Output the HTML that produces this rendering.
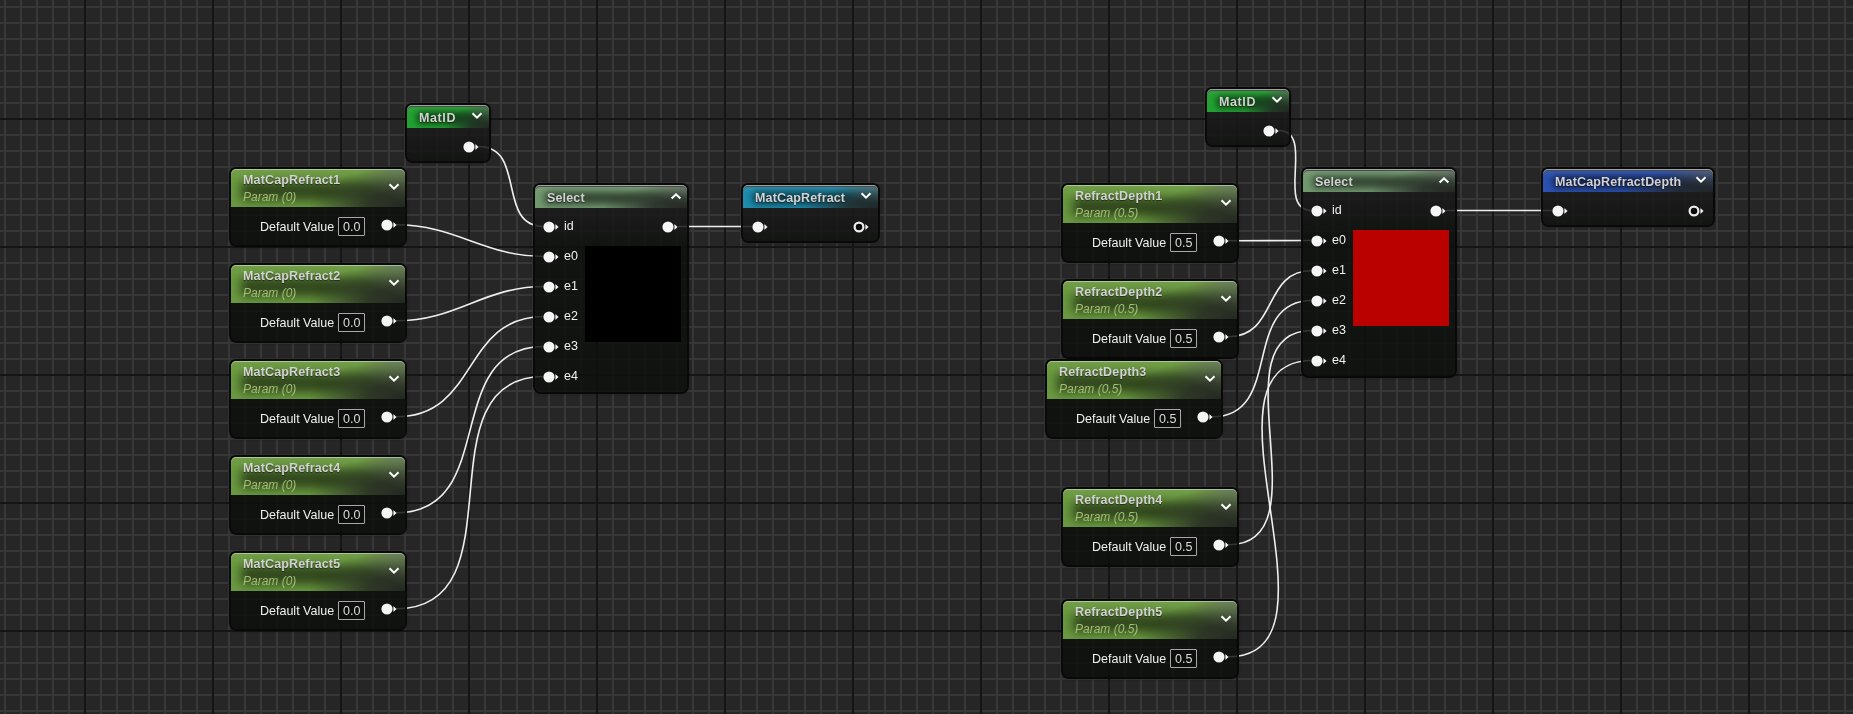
<!DOCTYPE html>
<html><head><meta charset="utf-8"><style>
*{margin:0;padding:0;box-sizing:border-box}
html,body{width:1853px;height:714px;overflow:hidden;background:#262626}
#g{position:absolute;left:0;top:0;width:1853px;height:714px;
background:
 linear-gradient(to right,#151515 0,#151515 2px,transparent 2px) 84px 0/128px 100% repeat-x,
 linear-gradient(to bottom,#151515 0,#151515 2px,transparent 2px) 0 118px/100% 128px repeat-y,
 linear-gradient(to right,#373737 0,#373737 2px,transparent 2px) 4px 0/16px 100% repeat-x,
 linear-gradient(to bottom,#373737 0,#373737 2px,transparent 2px) 0 6px/100% 16px repeat-y,
 #262626;}
.wires{position:absolute;left:0;top:0}
.wires path{fill:none;stroke:#efefef;stroke-width:1.6}
.node{position:absolute;border-radius:5px 5px 6px 6px;box-shadow:0 0 0 2px rgba(8,8,8,0.97),0 0 3px 2px rgba(0,0,0,0.22)}
.hdr{position:absolute;left:0;right:0;top:0;border-radius:5px 5px 0 0;overflow:hidden}
.shade{position:absolute;left:10px;right:0}
.spill,.gloss{position:absolute;left:0;right:0;top:0;bottom:0;border-radius:5px 5px 0 0}
.gloss{background:linear-gradient(to bottom,rgba(255,255,255,0.06),rgba(255,255,255,0) 40%)}
.body{position:absolute;left:0;right:0;bottom:0;border-radius:0 0 6px 6px;background:rgba(12,15,12,0.83)}
.bg2{background:linear-gradient(to bottom,rgba(26,27,26,0.88) 0px,rgba(22,23,22,0.86) 12px,rgba(12,15,12,0.83) 45px)}
.t,.sub,.lbl,.val{will-change:transform;position:absolute;white-space:nowrap;font-family:"Liberation Sans", sans-serif;line-height:0;height:0}
.t{letter-spacing:0.15px;font-weight:bold;font-size:12.5px;color:#d2d2d2;text-shadow:0 1px 1px rgba(0,0,0,0.5)}
.sub{font-style:italic;font-size:12px;color:#a4bc76}
.lbl{font-size:12.5px;color:#f0f0f0}
.val{font-size:12.5px;color:#dcdcdc}
.vbox{position:absolute;width:27px;height:19px;border:1px solid #a8a8a8;border-radius:1px;background:rgba(10,10,10,0.6)}
.ic{position:absolute;overflow:visible}
.prev{position:absolute;width:96px;height:96px}
</style></head>
<body><div id="g"></div><svg class="wires" width="1853" height="714" viewBox="0 0 1853 714"><path d="M478.5 146.5 C527.0 146.5 495.6 226.5 544.1 226.5"/><path d="M396.3 224.8 C456.1 224.8 484.3 256.5 544.1 256.5"/><path d="M396.3 320.8 C457.0 320.8 483.4 286.5 544.1 286.5"/><path d="M396.3 416.8 C479.0 416.8 461.4 316.5 544.1 316.5"/><path d="M396.3 512.8 C501.0 512.8 439.4 346.5 544.1 346.5"/><path d="M396.3 608.8 C523.0 608.8 417.4 376.5 544.1 376.5"/><path d="M678.0 226.5 C702.9 226.5 727.8 226.5 752.7 226.5"/><path d="M1278.5 130.5 C1316.4 130.5 1274.2 210.5 1312.1 210.5"/><path d="M1228.3 240.8 C1256.3 240.8 1284.1 240.5 1312.1 240.5"/><path d="M1228.3 336.8 C1278.3 336.8 1262.1 270.5 1312.1 270.5"/><path d="M1212.3 416.8 C1284.3 416.8 1240.1 300.5 1312.1 300.5"/><path d="M1228.3 544.8 C1327.7 544.8 1212.7 330.5 1312.1 330.5"/><path d="M1228.3 656.8 C1355.0 656.8 1185.4 360.5 1312.1 360.5"/><path d="M1446.0 210.5 C1481.6 210.5 1517.1 210.5 1552.7 210.5"/></svg><div class="node" style="left:407px;top:105px;width:81.5px;height:56.3px"><div class="hdr" style="height:23px;background:#22a232"><div class="shade" style="top:7px;height:12px;background:linear-gradient(to right,rgba(0,0,0,0.58) 0%,rgba(0,0,0,0.58) 50%,rgba(0,0,0,0.2) 100%);filter:blur(3.5px)"></div><div class="spill" style="background:radial-gradient(ellipse 28% 80% at 100% 0%, rgba(96,100,94,0.6) 0%, rgba(96,100,94,0) 100%),radial-gradient(ellipse 55% 105% at 100% 100%, rgba(34,36,34,0.97) 0%, rgba(34,36,34,0.8) 40%, rgba(34,36,34,0) 100%)"></div><div class="gloss" style="box-shadow: inset 0 1px 0 #a2a2a2, inset 0 2px 0 #4a4a4a"></div></div><div class="body bg2" style="top:23px"></div></div><div class="t" style="left:419.4px;top:118.2px;letter-spacing:0.6px">MatID</div><svg class="ic" style="left:470.1px;top:110px" width="14" height="11" viewBox="0 0 14 11"><path d="M2.5 3.2 L7 7.7 L11.5 3.2" fill="none" stroke="#fff" stroke-width="2"/></svg><svg class="ic" style="left:461.75px;top:139.5px" width="20" height="14" viewBox="0 0 20 14"><circle cx="7" cy="7" r="6.2" fill="rgba(0,0,0,0.55)"/><circle cx="7" cy="7" r="5.6" fill="#f6f6f6"/><path d="M12.9 3.4 L16.9 7 L12.9 10.6 Z" fill="rgba(0,0,0,0.5)"/><path d="M13.4 3.9 L16.6 7 L13.4 10.1 Z" fill="#f4f4f4"/></svg><div class="node" style="left:231px;top:169px;width:174px;height:75.5px"><div class="hdr" style="height:38px;background:#6a9a3e"><div class="shade" style="top:13px;height:18px;background:linear-gradient(to right,rgba(0,0,0,0.56) 0%,rgba(0,0,0,0.56) 50%,rgba(0,0,0,0.2) 100%);filter:blur(5.5px)"></div><div class="spill" style="background:radial-gradient(ellipse 28% 80% at 100% 0%, rgba(96,100,94,0.6) 0%, rgba(96,100,94,0) 100%),radial-gradient(ellipse 55% 105% at 100% 100%, rgba(34,36,34,0.97) 0%, rgba(34,36,34,0.8) 40%, rgba(34,36,34,0) 100%)"></div><div class="gloss" style="box-shadow: inset 0 1px 0 rgba(255,255,255,0.42)"></div></div><div class="body" style="top:38px"></div></div><div class="t" style="left:242.8px;top:180px;">MatCapRefract1</div><div class="sub" style="left:243.4px;top:196.8px;">Param (0)</div><svg class="ic" style="left:387px;top:181px" width="14" height="11" viewBox="0 0 14 11"><path d="M2.5 3.2 L7 7.7 L11.5 3.2" fill="none" stroke="#fff" stroke-width="2"/></svg><div class="lbl" style="left:260.2px;top:226.8px;">Default Value</div><div class="vbox" style="left:338px;top:217px"></div><div class="val" style="left:343px;top:227px;">0.0</div><svg class="ic" style="left:379.55px;top:217.8px" width="20" height="14" viewBox="0 0 20 14"><circle cx="7" cy="7" r="6.2" fill="rgba(0,0,0,0.55)"/><circle cx="7" cy="7" r="5.6" fill="#f6f6f6"/><path d="M12.9 3.4 L16.9 7 L12.9 10.6 Z" fill="rgba(0,0,0,0.5)"/><path d="M13.4 3.9 L16.6 7 L13.4 10.1 Z" fill="#f4f4f4"/></svg><div class="node" style="left:231px;top:265px;width:174px;height:75.5px"><div class="hdr" style="height:38px;background:#6a9a3e"><div class="shade" style="top:13px;height:18px;background:linear-gradient(to right,rgba(0,0,0,0.56) 0%,rgba(0,0,0,0.56) 50%,rgba(0,0,0,0.2) 100%);filter:blur(5.5px)"></div><div class="spill" style="background:radial-gradient(ellipse 28% 80% at 100% 0%, rgba(96,100,94,0.6) 0%, rgba(96,100,94,0) 100%),radial-gradient(ellipse 55% 105% at 100% 100%, rgba(34,36,34,0.97) 0%, rgba(34,36,34,0.8) 40%, rgba(34,36,34,0) 100%)"></div><div class="gloss" style="box-shadow: inset 0 1px 0 rgba(255,255,255,0.42)"></div></div><div class="body" style="top:38px"></div></div><div class="t" style="left:242.8px;top:276px;">MatCapRefract2</div><div class="sub" style="left:243.4px;top:292.8px;">Param (0)</div><svg class="ic" style="left:387px;top:277px" width="14" height="11" viewBox="0 0 14 11"><path d="M2.5 3.2 L7 7.7 L11.5 3.2" fill="none" stroke="#fff" stroke-width="2"/></svg><div class="lbl" style="left:260.2px;top:322.8px;">Default Value</div><div class="vbox" style="left:338px;top:313px"></div><div class="val" style="left:343px;top:323px;">0.0</div><svg class="ic" style="left:379.55px;top:313.8px" width="20" height="14" viewBox="0 0 20 14"><circle cx="7" cy="7" r="6.2" fill="rgba(0,0,0,0.55)"/><circle cx="7" cy="7" r="5.6" fill="#f6f6f6"/><path d="M12.9 3.4 L16.9 7 L12.9 10.6 Z" fill="rgba(0,0,0,0.5)"/><path d="M13.4 3.9 L16.6 7 L13.4 10.1 Z" fill="#f4f4f4"/></svg><div class="node" style="left:231px;top:361px;width:174px;height:75.5px"><div class="hdr" style="height:38px;background:#6a9a3e"><div class="shade" style="top:13px;height:18px;background:linear-gradient(to right,rgba(0,0,0,0.56) 0%,rgba(0,0,0,0.56) 50%,rgba(0,0,0,0.2) 100%);filter:blur(5.5px)"></div><div class="spill" style="background:radial-gradient(ellipse 28% 80% at 100% 0%, rgba(96,100,94,0.6) 0%, rgba(96,100,94,0) 100%),radial-gradient(ellipse 55% 105% at 100% 100%, rgba(34,36,34,0.97) 0%, rgba(34,36,34,0.8) 40%, rgba(34,36,34,0) 100%)"></div><div class="gloss" style="box-shadow: inset 0 1px 0 rgba(255,255,255,0.42)"></div></div><div class="body" style="top:38px"></div></div><div class="t" style="left:242.8px;top:372px;">MatCapRefract3</div><div class="sub" style="left:243.4px;top:388.8px;">Param (0)</div><svg class="ic" style="left:387px;top:373px" width="14" height="11" viewBox="0 0 14 11"><path d="M2.5 3.2 L7 7.7 L11.5 3.2" fill="none" stroke="#fff" stroke-width="2"/></svg><div class="lbl" style="left:260.2px;top:418.8px;">Default Value</div><div class="vbox" style="left:338px;top:409px"></div><div class="val" style="left:343px;top:419px;">0.0</div><svg class="ic" style="left:379.55px;top:409.8px" width="20" height="14" viewBox="0 0 20 14"><circle cx="7" cy="7" r="6.2" fill="rgba(0,0,0,0.55)"/><circle cx="7" cy="7" r="5.6" fill="#f6f6f6"/><path d="M12.9 3.4 L16.9 7 L12.9 10.6 Z" fill="rgba(0,0,0,0.5)"/><path d="M13.4 3.9 L16.6 7 L13.4 10.1 Z" fill="#f4f4f4"/></svg><div class="node" style="left:231px;top:457px;width:174px;height:75.5px"><div class="hdr" style="height:38px;background:#6a9a3e"><div class="shade" style="top:13px;height:18px;background:linear-gradient(to right,rgba(0,0,0,0.56) 0%,rgba(0,0,0,0.56) 50%,rgba(0,0,0,0.2) 100%);filter:blur(5.5px)"></div><div class="spill" style="background:radial-gradient(ellipse 28% 80% at 100% 0%, rgba(96,100,94,0.6) 0%, rgba(96,100,94,0) 100%),radial-gradient(ellipse 55% 105% at 100% 100%, rgba(34,36,34,0.97) 0%, rgba(34,36,34,0.8) 40%, rgba(34,36,34,0) 100%)"></div><div class="gloss" style="box-shadow: inset 0 1px 0 rgba(255,255,255,0.42)"></div></div><div class="body" style="top:38px"></div></div><div class="t" style="left:242.8px;top:468px;">MatCapRefract4</div><div class="sub" style="left:243.4px;top:484.8px;">Param (0)</div><svg class="ic" style="left:387px;top:469px" width="14" height="11" viewBox="0 0 14 11"><path d="M2.5 3.2 L7 7.7 L11.5 3.2" fill="none" stroke="#fff" stroke-width="2"/></svg><div class="lbl" style="left:260.2px;top:514.8px;">Default Value</div><div class="vbox" style="left:338px;top:505px"></div><div class="val" style="left:343px;top:515px;">0.0</div><svg class="ic" style="left:379.55px;top:505.79999999999995px" width="20" height="14" viewBox="0 0 20 14"><circle cx="7" cy="7" r="6.2" fill="rgba(0,0,0,0.55)"/><circle cx="7" cy="7" r="5.6" fill="#f6f6f6"/><path d="M12.9 3.4 L16.9 7 L12.9 10.6 Z" fill="rgba(0,0,0,0.5)"/><path d="M13.4 3.9 L16.6 7 L13.4 10.1 Z" fill="#f4f4f4"/></svg><div class="node" style="left:231px;top:553px;width:174px;height:75.5px"><div class="hdr" style="height:38px;background:#6a9a3e"><div class="shade" style="top:13px;height:18px;background:linear-gradient(to right,rgba(0,0,0,0.56) 0%,rgba(0,0,0,0.56) 50%,rgba(0,0,0,0.2) 100%);filter:blur(5.5px)"></div><div class="spill" style="background:radial-gradient(ellipse 28% 80% at 100% 0%, rgba(96,100,94,0.6) 0%, rgba(96,100,94,0) 100%),radial-gradient(ellipse 55% 105% at 100% 100%, rgba(34,36,34,0.97) 0%, rgba(34,36,34,0.8) 40%, rgba(34,36,34,0) 100%)"></div><div class="gloss" style="box-shadow: inset 0 1px 0 rgba(255,255,255,0.42)"></div></div><div class="body" style="top:38px"></div></div><div class="t" style="left:242.8px;top:564px;">MatCapRefract5</div><div class="sub" style="left:243.4px;top:580.8px;">Param (0)</div><svg class="ic" style="left:387px;top:565px" width="14" height="11" viewBox="0 0 14 11"><path d="M2.5 3.2 L7 7.7 L11.5 3.2" fill="none" stroke="#fff" stroke-width="2"/></svg><div class="lbl" style="left:260.2px;top:610.8px;">Default Value</div><div class="vbox" style="left:338px;top:601px"></div><div class="val" style="left:343px;top:611px;">0.0</div><svg class="ic" style="left:379.55px;top:601.8px" width="20" height="14" viewBox="0 0 20 14"><circle cx="7" cy="7" r="6.2" fill="rgba(0,0,0,0.55)"/><circle cx="7" cy="7" r="5.6" fill="#f6f6f6"/><path d="M12.9 3.4 L16.9 7 L12.9 10.6 Z" fill="rgba(0,0,0,0.5)"/><path d="M13.4 3.9 L16.6 7 L13.4 10.1 Z" fill="#f4f4f4"/></svg><div class="node" style="left:535px;top:185px;width:152.3px;height:207px"><div class="hdr" style="height:23px;background:#71996f"><div class="shade" style="top:7px;height:12px;background:linear-gradient(to right,rgba(0,0,0,0.55) 0%,rgba(0,0,0,0.55) 50%,rgba(0,0,0,0.2) 100%);filter:blur(3.5px)"></div><div class="spill" style="background:radial-gradient(ellipse 28% 80% at 100% 0%, rgba(96,100,94,0.6) 0%, rgba(96,100,94,0) 100%),radial-gradient(ellipse 55% 105% at 100% 100%, rgba(34,36,34,0.97) 0%, rgba(34,36,34,0.8) 40%, rgba(34,36,34,0) 100%)"></div><div class="gloss" style="box-shadow: inset 0 1px 0 #a2a2a2, inset 0 2px 0 #4a4a4a"></div></div><div class="body bg2" style="top:23px"></div></div><div class="t" style="left:547.4px;top:198px;">Select</div><svg class="ic" style="left:669px;top:190.5px" width="14" height="11" viewBox="0 0 14 11"><path d="M2.6 7.5 L7 3.3 L11.4 7.5" fill="none" stroke="#fff" stroke-width="2"/></svg><svg class="ic" style="left:542.35px;top:219.5px" width="20" height="14" viewBox="0 0 20 14"><circle cx="7" cy="7" r="6.2" fill="rgba(0,0,0,0.55)"/><circle cx="7" cy="7" r="5.6" fill="#f6f6f6"/><path d="M12.9 3.4 L16.9 7 L12.9 10.6 Z" fill="rgba(0,0,0,0.5)"/><path d="M13.4 3.9 L16.6 7 L13.4 10.1 Z" fill="#f4f4f4"/></svg><div class="lbl" style="left:564.3px;top:225.7px;">id</div><svg class="ic" style="left:542.35px;top:249.5px" width="20" height="14" viewBox="0 0 20 14"><circle cx="7" cy="7" r="6.2" fill="rgba(0,0,0,0.55)"/><circle cx="7" cy="7" r="5.6" fill="#f6f6f6"/><path d="M12.9 3.4 L16.9 7 L12.9 10.6 Z" fill="rgba(0,0,0,0.5)"/><path d="M13.4 3.9 L16.6 7 L13.4 10.1 Z" fill="#f4f4f4"/></svg><div class="lbl" style="left:564.3px;top:255.7px;">e0</div><svg class="ic" style="left:542.35px;top:279.5px" width="20" height="14" viewBox="0 0 20 14"><circle cx="7" cy="7" r="6.2" fill="rgba(0,0,0,0.55)"/><circle cx="7" cy="7" r="5.6" fill="#f6f6f6"/><path d="M12.9 3.4 L16.9 7 L12.9 10.6 Z" fill="rgba(0,0,0,0.5)"/><path d="M13.4 3.9 L16.6 7 L13.4 10.1 Z" fill="#f4f4f4"/></svg><div class="lbl" style="left:564.3px;top:285.7px;">e1</div><svg class="ic" style="left:542.35px;top:309.5px" width="20" height="14" viewBox="0 0 20 14"><circle cx="7" cy="7" r="6.2" fill="rgba(0,0,0,0.55)"/><circle cx="7" cy="7" r="5.6" fill="#f6f6f6"/><path d="M12.9 3.4 L16.9 7 L12.9 10.6 Z" fill="rgba(0,0,0,0.5)"/><path d="M13.4 3.9 L16.6 7 L13.4 10.1 Z" fill="#f4f4f4"/></svg><div class="lbl" style="left:564.3px;top:315.7px;">e2</div><svg class="ic" style="left:542.35px;top:339.5px" width="20" height="14" viewBox="0 0 20 14"><circle cx="7" cy="7" r="6.2" fill="rgba(0,0,0,0.55)"/><circle cx="7" cy="7" r="5.6" fill="#f6f6f6"/><path d="M12.9 3.4 L16.9 7 L12.9 10.6 Z" fill="rgba(0,0,0,0.5)"/><path d="M13.4 3.9 L16.6 7 L13.4 10.1 Z" fill="#f4f4f4"/></svg><div class="lbl" style="left:564.3px;top:345.7px;">e3</div><svg class="ic" style="left:542.35px;top:369.5px" width="20" height="14" viewBox="0 0 20 14"><circle cx="7" cy="7" r="6.2" fill="rgba(0,0,0,0.55)"/><circle cx="7" cy="7" r="5.6" fill="#f6f6f6"/><path d="M12.9 3.4 L16.9 7 L12.9 10.6 Z" fill="rgba(0,0,0,0.5)"/><path d="M13.4 3.9 L16.6 7 L13.4 10.1 Z" fill="#f4f4f4"/></svg><div class="lbl" style="left:564.3px;top:375.7px;">e4</div><svg class="ic" style="left:661.25px;top:219.5px" width="20" height="14" viewBox="0 0 20 14"><circle cx="7" cy="7" r="6.2" fill="rgba(0,0,0,0.55)"/><circle cx="7" cy="7" r="5.6" fill="#f6f6f6"/><path d="M12.9 3.4 L16.9 7 L12.9 10.6 Z" fill="rgba(0,0,0,0.5)"/><path d="M13.4 3.9 L16.6 7 L13.4 10.1 Z" fill="#f4f4f4"/></svg><div class="prev" style="left:585px;top:246px;background:#000"></div><div class="node" style="left:743px;top:185px;width:134.5px;height:56.3px"><div class="hdr" style="height:23px;background:#1d8cad"><div class="shade" style="top:7px;height:12px;background:linear-gradient(to right,rgba(0,0,0,0.58) 0%,rgba(0,0,0,0.58) 50%,rgba(0,0,0,0.2) 100%);filter:blur(3.5px)"></div><div class="spill" style="background:radial-gradient(ellipse 28% 80% at 100% 0%, rgba(96,100,94,0.6) 0%, rgba(96,100,94,0) 100%),radial-gradient(ellipse 55% 105% at 100% 100%, rgba(34,36,34,0.97) 0%, rgba(34,36,34,0.8) 40%, rgba(34,36,34,0) 100%)"></div><div class="gloss" style="box-shadow: inset 0 1px 0 #a2a2a2, inset 0 2px 0 #4a4a4a"></div></div><div class="body bg2" style="top:23px"></div></div><div class="t" style="left:755.4px;top:198.2px;">MatCapRefract</div><svg class="ic" style="left:859.1px;top:190px" width="14" height="11" viewBox="0 0 14 11"><path d="M2.5 3.2 L7 7.7 L11.5 3.2" fill="none" stroke="#fff" stroke-width="2"/></svg><svg class="ic" style="left:750.95px;top:219.5px" width="20" height="14" viewBox="0 0 20 14"><circle cx="7" cy="7" r="6.2" fill="rgba(0,0,0,0.55)"/><circle cx="7" cy="7" r="5.6" fill="#f6f6f6"/><path d="M12.9 3.4 L16.9 7 L12.9 10.6 Z" fill="rgba(0,0,0,0.5)"/><path d="M13.4 3.9 L16.6 7 L13.4 10.1 Z" fill="#f4f4f4"/></svg><svg class="ic" style="left:851.6px;top:219.5px" width="20" height="14" viewBox="0 0 20 14"><circle cx="7" cy="7" r="6.1" fill="rgba(0,0,0,0.55)"/><circle cx="7" cy="7" r="4.4" fill="#0a0a0a" stroke="#ececec" stroke-width="2.3"/><path d="M12.9 3.4 L16.9 7 L12.9 10.6 Z" fill="rgba(0,0,0,0.5)"/><path d="M13.4 3.9 L16.6 7 L13.4 10.1 Z" fill="#f4f4f4"/></svg><div class="node" style="left:1207px;top:89px;width:81.5px;height:56.3px"><div class="hdr" style="height:23px;background:#22a232"><div class="shade" style="top:7px;height:12px;background:linear-gradient(to right,rgba(0,0,0,0.58) 0%,rgba(0,0,0,0.58) 50%,rgba(0,0,0,0.2) 100%);filter:blur(3.5px)"></div><div class="spill" style="background:radial-gradient(ellipse 28% 80% at 100% 0%, rgba(96,100,94,0.6) 0%, rgba(96,100,94,0) 100%),radial-gradient(ellipse 55% 105% at 100% 100%, rgba(34,36,34,0.97) 0%, rgba(34,36,34,0.8) 40%, rgba(34,36,34,0) 100%)"></div><div class="gloss" style="box-shadow: inset 0 1px 0 #a2a2a2, inset 0 2px 0 #4a4a4a"></div></div><div class="body bg2" style="top:23px"></div></div><div class="t" style="left:1219.4px;top:102.2px;letter-spacing:0.6px">MatID</div><svg class="ic" style="left:1270.1px;top:94px" width="14" height="11" viewBox="0 0 14 11"><path d="M2.5 3.2 L7 7.7 L11.5 3.2" fill="none" stroke="#fff" stroke-width="2"/></svg><svg class="ic" style="left:1261.75px;top:123.5px" width="20" height="14" viewBox="0 0 20 14"><circle cx="7" cy="7" r="6.2" fill="rgba(0,0,0,0.55)"/><circle cx="7" cy="7" r="5.6" fill="#f6f6f6"/><path d="M12.9 3.4 L16.9 7 L12.9 10.6 Z" fill="rgba(0,0,0,0.5)"/><path d="M13.4 3.9 L16.6 7 L13.4 10.1 Z" fill="#f4f4f4"/></svg><div class="node" style="left:1063px;top:185px;width:174px;height:75.5px"><div class="hdr" style="height:38px;background:#6a9a3e"><div class="shade" style="top:13px;height:18px;background:linear-gradient(to right,rgba(0,0,0,0.56) 0%,rgba(0,0,0,0.56) 50%,rgba(0,0,0,0.2) 100%);filter:blur(5.5px)"></div><div class="spill" style="background:radial-gradient(ellipse 28% 80% at 100% 0%, rgba(96,100,94,0.6) 0%, rgba(96,100,94,0) 100%),radial-gradient(ellipse 55% 105% at 100% 100%, rgba(34,36,34,0.97) 0%, rgba(34,36,34,0.8) 40%, rgba(34,36,34,0) 100%)"></div><div class="gloss" style="box-shadow: inset 0 1px 0 rgba(255,255,255,0.42)"></div></div><div class="body" style="top:38px"></div></div><div class="t" style="left:1074.8px;top:196px;">RefractDepth1</div><div class="sub" style="left:1075.4px;top:212.8px;">Param (0.5)</div><svg class="ic" style="left:1219px;top:197px" width="14" height="11" viewBox="0 0 14 11"><path d="M2.5 3.2 L7 7.7 L11.5 3.2" fill="none" stroke="#fff" stroke-width="2"/></svg><div class="lbl" style="left:1092.2px;top:242.8px;">Default Value</div><div class="vbox" style="left:1170px;top:233px"></div><div class="val" style="left:1175px;top:243px;">0.5</div><svg class="ic" style="left:1211.55px;top:233.8px" width="20" height="14" viewBox="0 0 20 14"><circle cx="7" cy="7" r="6.2" fill="rgba(0,0,0,0.55)"/><circle cx="7" cy="7" r="5.6" fill="#f6f6f6"/><path d="M12.9 3.4 L16.9 7 L12.9 10.6 Z" fill="rgba(0,0,0,0.5)"/><path d="M13.4 3.9 L16.6 7 L13.4 10.1 Z" fill="#f4f4f4"/></svg><div class="node" style="left:1063px;top:281px;width:174px;height:75.5px"><div class="hdr" style="height:38px;background:#6a9a3e"><div class="shade" style="top:13px;height:18px;background:linear-gradient(to right,rgba(0,0,0,0.56) 0%,rgba(0,0,0,0.56) 50%,rgba(0,0,0,0.2) 100%);filter:blur(5.5px)"></div><div class="spill" style="background:radial-gradient(ellipse 28% 80% at 100% 0%, rgba(96,100,94,0.6) 0%, rgba(96,100,94,0) 100%),radial-gradient(ellipse 55% 105% at 100% 100%, rgba(34,36,34,0.97) 0%, rgba(34,36,34,0.8) 40%, rgba(34,36,34,0) 100%)"></div><div class="gloss" style="box-shadow: inset 0 1px 0 rgba(255,255,255,0.42)"></div></div><div class="body" style="top:38px"></div></div><div class="t" style="left:1074.8px;top:292px;">RefractDepth2</div><div class="sub" style="left:1075.4px;top:308.8px;">Param (0.5)</div><svg class="ic" style="left:1219px;top:293px" width="14" height="11" viewBox="0 0 14 11"><path d="M2.5 3.2 L7 7.7 L11.5 3.2" fill="none" stroke="#fff" stroke-width="2"/></svg><div class="lbl" style="left:1092.2px;top:338.8px;">Default Value</div><div class="vbox" style="left:1170px;top:329px"></div><div class="val" style="left:1175px;top:339px;">0.5</div><svg class="ic" style="left:1211.55px;top:329.8px" width="20" height="14" viewBox="0 0 20 14"><circle cx="7" cy="7" r="6.2" fill="rgba(0,0,0,0.55)"/><circle cx="7" cy="7" r="5.6" fill="#f6f6f6"/><path d="M12.9 3.4 L16.9 7 L12.9 10.6 Z" fill="rgba(0,0,0,0.5)"/><path d="M13.4 3.9 L16.6 7 L13.4 10.1 Z" fill="#f4f4f4"/></svg><div class="node" style="left:1047px;top:361px;width:174px;height:75.5px"><div class="hdr" style="height:38px;background:#6a9a3e"><div class="shade" style="top:13px;height:18px;background:linear-gradient(to right,rgba(0,0,0,0.56) 0%,rgba(0,0,0,0.56) 50%,rgba(0,0,0,0.2) 100%);filter:blur(5.5px)"></div><div class="spill" style="background:radial-gradient(ellipse 28% 80% at 100% 0%, rgba(96,100,94,0.6) 0%, rgba(96,100,94,0) 100%),radial-gradient(ellipse 55% 105% at 100% 100%, rgba(34,36,34,0.97) 0%, rgba(34,36,34,0.8) 40%, rgba(34,36,34,0) 100%)"></div><div class="gloss" style="box-shadow: inset 0 1px 0 rgba(255,255,255,0.42)"></div></div><div class="body" style="top:38px"></div></div><div class="t" style="left:1058.8px;top:372px;">RefractDepth3</div><div class="sub" style="left:1059.4px;top:388.8px;">Param (0.5)</div><svg class="ic" style="left:1203px;top:373px" width="14" height="11" viewBox="0 0 14 11"><path d="M2.5 3.2 L7 7.7 L11.5 3.2" fill="none" stroke="#fff" stroke-width="2"/></svg><div class="lbl" style="left:1076.2px;top:418.8px;">Default Value</div><div class="vbox" style="left:1154px;top:409px"></div><div class="val" style="left:1159px;top:419px;">0.5</div><svg class="ic" style="left:1195.55px;top:409.8px" width="20" height="14" viewBox="0 0 20 14"><circle cx="7" cy="7" r="6.2" fill="rgba(0,0,0,0.55)"/><circle cx="7" cy="7" r="5.6" fill="#f6f6f6"/><path d="M12.9 3.4 L16.9 7 L12.9 10.6 Z" fill="rgba(0,0,0,0.5)"/><path d="M13.4 3.9 L16.6 7 L13.4 10.1 Z" fill="#f4f4f4"/></svg><div class="node" style="left:1063px;top:489px;width:174px;height:75.5px"><div class="hdr" style="height:38px;background:#6a9a3e"><div class="shade" style="top:13px;height:18px;background:linear-gradient(to right,rgba(0,0,0,0.56) 0%,rgba(0,0,0,0.56) 50%,rgba(0,0,0,0.2) 100%);filter:blur(5.5px)"></div><div class="spill" style="background:radial-gradient(ellipse 28% 80% at 100% 0%, rgba(96,100,94,0.6) 0%, rgba(96,100,94,0) 100%),radial-gradient(ellipse 55% 105% at 100% 100%, rgba(34,36,34,0.97) 0%, rgba(34,36,34,0.8) 40%, rgba(34,36,34,0) 100%)"></div><div class="gloss" style="box-shadow: inset 0 1px 0 rgba(255,255,255,0.42)"></div></div><div class="body" style="top:38px"></div></div><div class="t" style="left:1074.8px;top:500px;">RefractDepth4</div><div class="sub" style="left:1075.4px;top:516.8px;">Param (0.5)</div><svg class="ic" style="left:1219px;top:501px" width="14" height="11" viewBox="0 0 14 11"><path d="M2.5 3.2 L7 7.7 L11.5 3.2" fill="none" stroke="#fff" stroke-width="2"/></svg><div class="lbl" style="left:1092.2px;top:546.8px;">Default Value</div><div class="vbox" style="left:1170px;top:537px"></div><div class="val" style="left:1175px;top:547px;">0.5</div><svg class="ic" style="left:1211.55px;top:537.8px" width="20" height="14" viewBox="0 0 20 14"><circle cx="7" cy="7" r="6.2" fill="rgba(0,0,0,0.55)"/><circle cx="7" cy="7" r="5.6" fill="#f6f6f6"/><path d="M12.9 3.4 L16.9 7 L12.9 10.6 Z" fill="rgba(0,0,0,0.5)"/><path d="M13.4 3.9 L16.6 7 L13.4 10.1 Z" fill="#f4f4f4"/></svg><div class="node" style="left:1063px;top:601px;width:174px;height:75.5px"><div class="hdr" style="height:38px;background:#6a9a3e"><div class="shade" style="top:13px;height:18px;background:linear-gradient(to right,rgba(0,0,0,0.56) 0%,rgba(0,0,0,0.56) 50%,rgba(0,0,0,0.2) 100%);filter:blur(5.5px)"></div><div class="spill" style="background:radial-gradient(ellipse 28% 80% at 100% 0%, rgba(96,100,94,0.6) 0%, rgba(96,100,94,0) 100%),radial-gradient(ellipse 55% 105% at 100% 100%, rgba(34,36,34,0.97) 0%, rgba(34,36,34,0.8) 40%, rgba(34,36,34,0) 100%)"></div><div class="gloss" style="box-shadow: inset 0 1px 0 rgba(255,255,255,0.42)"></div></div><div class="body" style="top:38px"></div></div><div class="t" style="left:1074.8px;top:612px;">RefractDepth5</div><div class="sub" style="left:1075.4px;top:628.8px;">Param (0.5)</div><svg class="ic" style="left:1219px;top:613px" width="14" height="11" viewBox="0 0 14 11"><path d="M2.5 3.2 L7 7.7 L11.5 3.2" fill="none" stroke="#fff" stroke-width="2"/></svg><div class="lbl" style="left:1092.2px;top:658.8px;">Default Value</div><div class="vbox" style="left:1170px;top:649px"></div><div class="val" style="left:1175px;top:659px;">0.5</div><svg class="ic" style="left:1211.55px;top:649.8px" width="20" height="14" viewBox="0 0 20 14"><circle cx="7" cy="7" r="6.2" fill="rgba(0,0,0,0.55)"/><circle cx="7" cy="7" r="5.6" fill="#f6f6f6"/><path d="M12.9 3.4 L16.9 7 L12.9 10.6 Z" fill="rgba(0,0,0,0.5)"/><path d="M13.4 3.9 L16.6 7 L13.4 10.1 Z" fill="#f4f4f4"/></svg><div class="node" style="left:1303px;top:169px;width:152.3px;height:207px"><div class="hdr" style="height:23px;background:#71996f"><div class="shade" style="top:7px;height:12px;background:linear-gradient(to right,rgba(0,0,0,0.55) 0%,rgba(0,0,0,0.55) 50%,rgba(0,0,0,0.2) 100%);filter:blur(3.5px)"></div><div class="spill" style="background:radial-gradient(ellipse 28% 80% at 100% 0%, rgba(96,100,94,0.6) 0%, rgba(96,100,94,0) 100%),radial-gradient(ellipse 55% 105% at 100% 100%, rgba(34,36,34,0.97) 0%, rgba(34,36,34,0.8) 40%, rgba(34,36,34,0) 100%)"></div><div class="gloss" style="box-shadow: inset 0 1px 0 #a2a2a2, inset 0 2px 0 #4a4a4a"></div></div><div class="body bg2" style="top:23px"></div></div><div class="t" style="left:1315.4px;top:182px;">Select</div><svg class="ic" style="left:1437px;top:174.5px" width="14" height="11" viewBox="0 0 14 11"><path d="M2.6 7.5 L7 3.3 L11.4 7.5" fill="none" stroke="#fff" stroke-width="2"/></svg><svg class="ic" style="left:1310.35px;top:203.5px" width="20" height="14" viewBox="0 0 20 14"><circle cx="7" cy="7" r="6.2" fill="rgba(0,0,0,0.55)"/><circle cx="7" cy="7" r="5.6" fill="#f6f6f6"/><path d="M12.9 3.4 L16.9 7 L12.9 10.6 Z" fill="rgba(0,0,0,0.5)"/><path d="M13.4 3.9 L16.6 7 L13.4 10.1 Z" fill="#f4f4f4"/></svg><div class="lbl" style="left:1332.3px;top:209.7px;">id</div><svg class="ic" style="left:1310.35px;top:233.5px" width="20" height="14" viewBox="0 0 20 14"><circle cx="7" cy="7" r="6.2" fill="rgba(0,0,0,0.55)"/><circle cx="7" cy="7" r="5.6" fill="#f6f6f6"/><path d="M12.9 3.4 L16.9 7 L12.9 10.6 Z" fill="rgba(0,0,0,0.5)"/><path d="M13.4 3.9 L16.6 7 L13.4 10.1 Z" fill="#f4f4f4"/></svg><div class="lbl" style="left:1332.3px;top:239.7px;">e0</div><svg class="ic" style="left:1310.35px;top:263.5px" width="20" height="14" viewBox="0 0 20 14"><circle cx="7" cy="7" r="6.2" fill="rgba(0,0,0,0.55)"/><circle cx="7" cy="7" r="5.6" fill="#f6f6f6"/><path d="M12.9 3.4 L16.9 7 L12.9 10.6 Z" fill="rgba(0,0,0,0.5)"/><path d="M13.4 3.9 L16.6 7 L13.4 10.1 Z" fill="#f4f4f4"/></svg><div class="lbl" style="left:1332.3px;top:269.7px;">e1</div><svg class="ic" style="left:1310.35px;top:293.5px" width="20" height="14" viewBox="0 0 20 14"><circle cx="7" cy="7" r="6.2" fill="rgba(0,0,0,0.55)"/><circle cx="7" cy="7" r="5.6" fill="#f6f6f6"/><path d="M12.9 3.4 L16.9 7 L12.9 10.6 Z" fill="rgba(0,0,0,0.5)"/><path d="M13.4 3.9 L16.6 7 L13.4 10.1 Z" fill="#f4f4f4"/></svg><div class="lbl" style="left:1332.3px;top:299.7px;">e2</div><svg class="ic" style="left:1310.35px;top:323.5px" width="20" height="14" viewBox="0 0 20 14"><circle cx="7" cy="7" r="6.2" fill="rgba(0,0,0,0.55)"/><circle cx="7" cy="7" r="5.6" fill="#f6f6f6"/><path d="M12.9 3.4 L16.9 7 L12.9 10.6 Z" fill="rgba(0,0,0,0.5)"/><path d="M13.4 3.9 L16.6 7 L13.4 10.1 Z" fill="#f4f4f4"/></svg><div class="lbl" style="left:1332.3px;top:329.7px;">e3</div><svg class="ic" style="left:1310.35px;top:353.5px" width="20" height="14" viewBox="0 0 20 14"><circle cx="7" cy="7" r="6.2" fill="rgba(0,0,0,0.55)"/><circle cx="7" cy="7" r="5.6" fill="#f6f6f6"/><path d="M12.9 3.4 L16.9 7 L12.9 10.6 Z" fill="rgba(0,0,0,0.5)"/><path d="M13.4 3.9 L16.6 7 L13.4 10.1 Z" fill="#f4f4f4"/></svg><div class="lbl" style="left:1332.3px;top:359.7px;">e4</div><svg class="ic" style="left:1429.25px;top:203.5px" width="20" height="14" viewBox="0 0 20 14"><circle cx="7" cy="7" r="6.2" fill="rgba(0,0,0,0.55)"/><circle cx="7" cy="7" r="5.6" fill="#f6f6f6"/><path d="M12.9 3.4 L16.9 7 L12.9 10.6 Z" fill="rgba(0,0,0,0.5)"/><path d="M13.4 3.9 L16.6 7 L13.4 10.1 Z" fill="#f4f4f4"/></svg><div class="prev" style="left:1353px;top:230px;background:#bb0000"></div><div class="node" style="left:1543px;top:169px;width:169.5px;height:56.3px"><div class="hdr" style="height:23px;background:#2b52b2"><div class="shade" style="top:7px;height:12px;background:linear-gradient(to right,rgba(0,0,0,0.6) 0%,rgba(0,0,0,0.6) 50%,rgba(0,0,0,0.2) 100%);filter:blur(3.5px)"></div><div class="spill" style="background:radial-gradient(ellipse 28% 80% at 100% 0%, rgba(96,100,94,0.6) 0%, rgba(96,100,94,0) 100%),radial-gradient(ellipse 55% 105% at 100% 100%, rgba(34,36,34,0.97) 0%, rgba(34,36,34,0.8) 40%, rgba(34,36,34,0) 100%)"></div><div class="gloss" style="box-shadow: inset 0 1px 0 #a2a2a2, inset 0 2px 0 #4a4a4a"></div></div><div class="body bg2" style="top:23px"></div></div><div class="t" style="left:1555.4px;top:182.2px;">MatCapRefractDepth</div><svg class="ic" style="left:1694.1px;top:174px" width="14" height="11" viewBox="0 0 14 11"><path d="M2.5 3.2 L7 7.7 L11.5 3.2" fill="none" stroke="#fff" stroke-width="2"/></svg><svg class="ic" style="left:1550.95px;top:203.5px" width="20" height="14" viewBox="0 0 20 14"><circle cx="7" cy="7" r="6.2" fill="rgba(0,0,0,0.55)"/><circle cx="7" cy="7" r="5.6" fill="#f6f6f6"/><path d="M12.9 3.4 L16.9 7 L12.9 10.6 Z" fill="rgba(0,0,0,0.5)"/><path d="M13.4 3.9 L16.6 7 L13.4 10.1 Z" fill="#f4f4f4"/></svg><svg class="ic" style="left:1686.6px;top:203.5px" width="20" height="14" viewBox="0 0 20 14"><circle cx="7" cy="7" r="6.1" fill="rgba(0,0,0,0.55)"/><circle cx="7" cy="7" r="4.4" fill="#0a0a0a" stroke="#ececec" stroke-width="2.3"/><path d="M12.9 3.4 L16.9 7 L12.9 10.6 Z" fill="rgba(0,0,0,0.5)"/><path d="M13.4 3.9 L16.6 7 L13.4 10.1 Z" fill="#f4f4f4"/></svg></body></html>
